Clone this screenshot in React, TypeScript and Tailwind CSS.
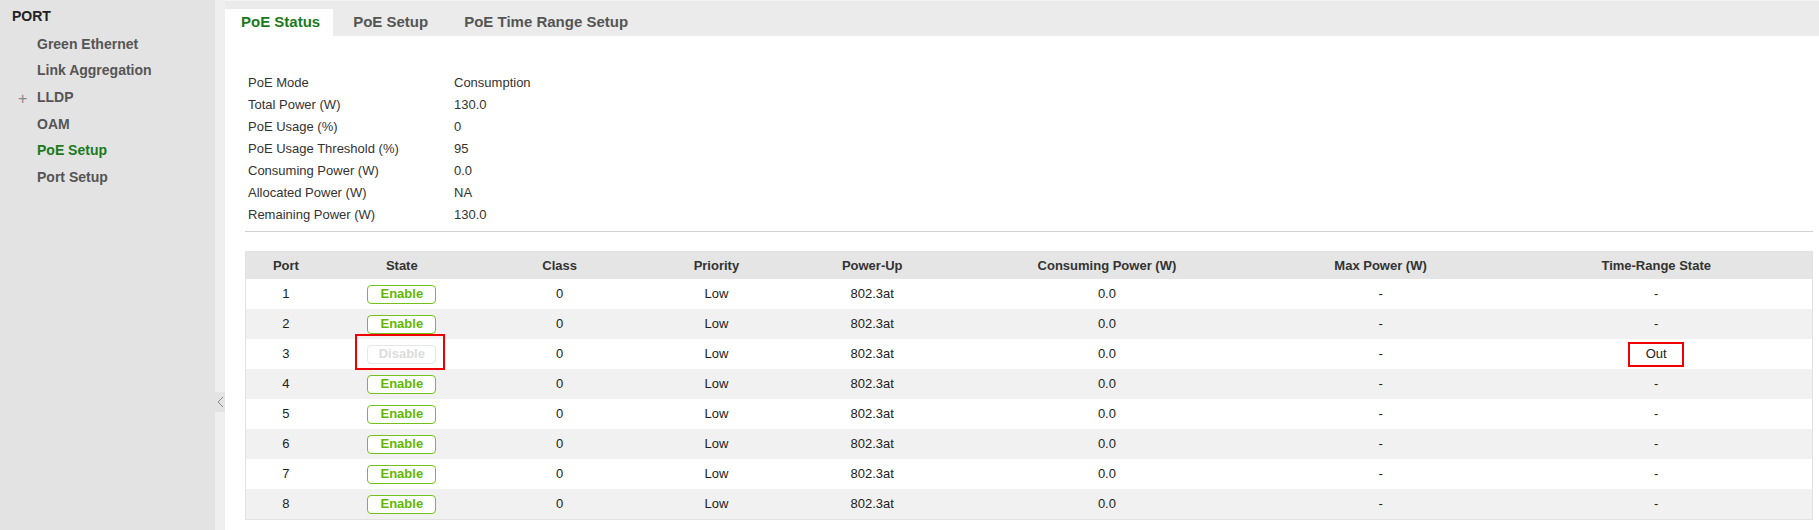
import React from 'react';

const font = { fontFamily: '"Liberation Sans", Arial, sans-serif' };

const menu = [
  { label: 'Green Ethernet' },
  { label: 'Link Aggregation' },
  { label: 'LLDP', plus: true },
  { label: 'OAM' },
  { label: 'PoE Setup', active: true },
  { label: 'Port Setup' },
];

const stats: [string, string][] = [
  ['PoE Mode', 'Consumption'],
  ['Total Power (W)', '130.0'],
  ['PoE Usage (%)', '0'],
  ['PoE Usage Threshold (%)', '95'],
  ['Consuming Power (W)', '0.0'],
  ['Allocated Power (W)', 'NA'],
  ['Remaining Power (W)', '130.0'],
];

const columns = [
  { name: 'Port', w: 'w-[80px]' },
  { name: 'State', w: 'w-[152px]' },
  { name: 'Class', w: 'w-[164px]' },
  { name: 'Priority', w: 'w-[150px]' },
  { name: 'Power-Up', w: 'w-[162px]' },
  { name: 'Consuming Power (W)', w: 'w-[308px]' },
  { name: 'Max Power (W)', w: 'w-[240px]' },
  { name: 'Time-Range State', w: 'w-[312px]' },
];

const ports = [1, 2, 3, 4, 5, 6, 7, 8];

function StateButton({ port }: { port: number }) {
  if (port === 3) {
    return (
      <div className="relative">
        <div className="w-[69px] h-[19px] rounded-[4px] border border-[#e6e6e6] bg-white flex items-center justify-center text-[13px] font-bold text-[#dcdcdc]">
          Disable
        </div>
        <div className="absolute left-[-12px] top-[-11px] w-[90px] h-[36px] border-2 border-[#f00000]" />
      </div>
    );
  }
  return (
    <div className="w-[69px] h-[19px] rounded-[4px] border-[1.5px] border-[#72c11c] bg-white flex items-center justify-center text-[13px] font-bold text-[#62b800]">
      Enable
    </div>
  );
}

function Sidebar() {
  return (
    <div className="w-[215px] h-[530px] bg-[#e3e3e3] pt-[3px] shrink-0">
      <div className="h-[26px] pl-[12px] flex items-center text-[14px] font-bold text-[#222]">PORT</div>
      <div className="mt-[2px]">
        {menu.map((m) => (
          <div key={m.label} className="h-[26.6px] flex items-center relative pl-[37px]">
            {m.plus && (
              <span className="absolute left-[18px] top-[3px] text-[16px] text-[#888] font-normal">+</span>
            )}
            <span className={`text-[14px] font-bold ${m.active ? 'text-[#1b7a1b]' : 'text-[#555]'}`}>
              {m.label}
            </span>
          </div>
        ))}
      </div>
    </div>
  );
}

export default function App() {
  return (
    <div className="flex w-[1819px] h-[530px] overflow-hidden bg-white" style={font}>
      <Sidebar />
      <div className="w-[10px] h-[530px] bg-[#efefef] shrink-0 pt-[392px]">
        <div className="w-[10px] h-[20px] bg-[#e3e3e3] flex items-center justify-center">
          <svg width="7" height="12" viewBox="0 0 7 12">
            <path d="M6 1 L1 6 L6 11" fill="none" stroke="#8a8a8a" strokeWidth="1" />
          </svg>
        </div>
      </div>
      <div className="flex-1 flex flex-col">
        <div className="h-[36px] bg-[#ebebeb] border-t border-[#f4f4f4] flex items-end gap-[4px]">
          <div className="h-[27px] bg-white pl-[16px] pr-[13px] flex items-center text-[15px] font-bold text-[#1b7a1b]">
            PoE Status
          </div>
          <div className="h-[27px] px-[16px] flex items-center text-[15px] font-bold text-[#555]">
            PoE Setup
          </div>
          <div className="h-[27px] px-[16px] flex items-center text-[15px] font-bold text-[#555]">
            PoE Time Range Setup
          </div>
        </div>
        <div className="pl-[20px] pr-[6px] pt-[36px]">
          <div className="pl-[3px]">
            {stats.map(([k, v]) => (
              <div key={k} className="h-[22px] flex items-center text-[13px] text-[#333]">
                <span className="w-[206px]">{k}</span>
                <span>{v}</span>
              </div>
            ))}
          </div>
          <div className="mt-[5px] h-px bg-[#cfcfcf]" />
          <div className="mt-[19px] w-[1568px] border border-[#e2e2e2]">
            <div className="flex h-[27px] bg-[#e5e5e5]">
              {columns.map((c) => (
                <div key={c.name} className={`${c.w} flex items-center justify-center text-[13px] font-bold text-[#333]`}>
                  {c.name}
                </div>
              ))}
            </div>
            {ports.map((p, i) => (
              <div key={p} className={`flex h-[30px] text-[13px] text-[#222] ${i % 2 === 1 ? 'bg-[#f1f1f1]' : 'bg-white'}`}>
                <div className="w-[80px] flex items-center justify-center">{p}</div>
                <div className="w-[152px] flex items-center justify-center">
                  <StateButton port={p} />
                </div>
                <div className="w-[164px] flex items-center justify-center">0</div>
                <div className="w-[150px] flex items-center justify-center">Low</div>
                <div className="w-[162px] flex items-center justify-center">802.3at</div>
                <div className="w-[308px] flex items-center justify-center">0.0</div>
                <div className="w-[240px] flex items-center justify-center">-</div>
                <div className="w-[312px] flex items-center justify-center">
                  {p === 3 ? (
                    <div className="w-[56px] h-[25px] border-2 border-[#f00000] flex items-center justify-center">Out</div>
                  ) : (
                    '-'
                  )}
                </div>
              </div>
            ))}
          </div>
        </div>
      </div>
    </div>
  );
}
